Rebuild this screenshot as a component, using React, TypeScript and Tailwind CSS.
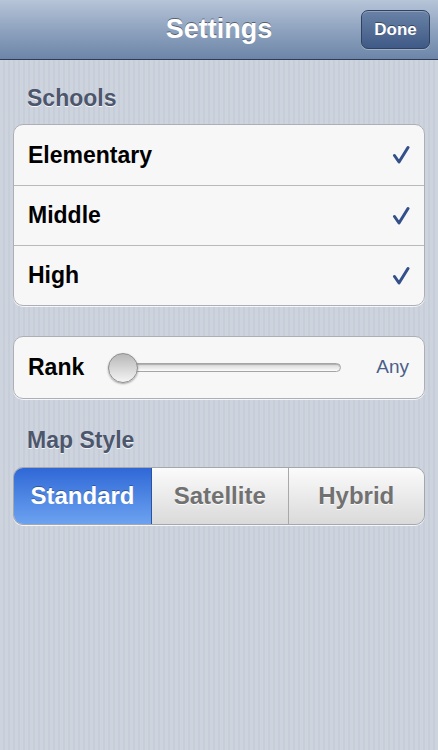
import React from "react";

const Check = () => (
  <svg width="18" height="20" viewBox="0 0 18 20" className="shrink-0">
    <path d="M2.5 10.5 L7 17 L16 2.5" fill="none" stroke="#34508a" strokeWidth="3" strokeLinecap="round" strokeLinejoin="round" />
  </svg>
);

const schools = ["Elementary", "Middle", "High"];
const styles = ["Standard", "Satellite", "Hybrid"];

export default function App() {
  return (
    <div
      className="w-[438px] h-[750px] overflow-hidden bg-[#cdd3dd] bg-[repeating-linear-gradient(90deg,#ced4de_0px,#ced4de_3px,#c8ced9_3px,#c8ced9_5px)]"
      style={{ fontFamily: '"Liberation Sans", Arial, sans-serif' }}
    >
      {/* Nav bar */}
      <div className="relative h-[60px] flex items-center justify-center bg-gradient-to-b from-[#b7c5d8] via-[#8fa3bf] to-[#6d86a8] border-b border-[#2e3d55]">
        <h1 className="text-[27px] font-bold text-white [text-shadow:0_-1px_0_rgba(0,0,0,0.45)]">Settings</h1>
        <button className="absolute right-[8px] top-[10px] w-[69px] h-[39px] rounded-[7px] border border-[#2f4260] bg-gradient-to-b from-[#6a82a6] to-[#3f5a86] shadow-[inset_0_1px_0_rgba(255,255,255,0.25),0_1px_0_rgba(255,255,255,0.3)] text-[17px] font-bold text-white [text-shadow:0_-1px_0_rgba(0,0,0,0.4)]">
          Done
        </button>
      </div>

      <div className="px-[13px]">
        {/* Schools */}
        <h2 className="mt-[26px] pl-[14px] text-[23px] leading-[24px] font-bold text-[#4c566c] [text-shadow:0_1px_0_rgba(255,255,255,0.8)]">
          Schools
        </h2>
        <div className="mt-[14px] rounded-[10px] border border-[#acb0b6] bg-[#f7f7f7] shadow-[0_1px_0_rgba(255,255,255,0.8)]">
          {schools.map((s, i) => (
            <div
              key={s}
              className={`h-[60px] flex items-center justify-between pl-[14px] pr-[14px] ${i > 0 ? "border-t border-[#b9b9b9]" : ""}`}
            >
              <span className="text-[23px] font-bold text-black">{s}</span>
              <Check />
            </div>
          ))}
        </div>

        {/* Rank */}
        <div className="mt-[30px] h-[63px] flex items-center rounded-[10px] border border-[#acb0b6] bg-[#f7f7f7] pl-[14px] pr-[15px] shadow-[0_1px_0_rgba(255,255,255,0.8)]">
          <span className="text-[23px] font-bold text-black w-[80px]">Rank</span>
          <div className="relative flex-1 h-[30px] flex items-center">
            <div className="w-[233px] h-[9px] rounded-full border border-[#a5a5a5] bg-gradient-to-b from-[#d6d6d6] to-[#fbfbfb] shadow-[inset_0_1px_1px_rgba(0,0,0,0.2)]" />
            <div className="absolute left-0 top-0 w-[30px] h-[30px] rounded-full border border-[#8e8e8e] bg-gradient-to-b from-[#b8b8b8] to-[#f4f4f4] shadow-[0_1px_2px_rgba(0,0,0,0.35)]" />
          </div>
          <span className="text-[19px] text-[#4a5f8a]">Any</span>
        </div>

        {/* Map style */}
        <h2 className="mt-[29px] pl-[14px] text-[23px] leading-[24px] font-bold text-[#4c566c] [text-shadow:0_1px_0_rgba(255,255,255,0.8)]">
          Map Style
        </h2>
        <div className="mt-[15px] h-[58px] flex rounded-[10px] border border-[#a4a7ac] overflow-hidden shadow-[0_1px_0_rgba(255,255,255,0.8)]">
          {styles.map((s, i) =>
            i === 0 ? (
              <div
                key={s}
                className="w-[138px] flex items-center justify-center bg-gradient-to-b from-[#2f68d6] to-[#6da2f0] border-r border-[#2d52a0] text-[24px] font-bold text-white [text-shadow:0_-1px_0_rgba(0,0,0,0.3)]"
              >
                {s}
              </div>
            ) : (
              <div
                key={s}
                className={`flex-1 flex items-center justify-center bg-gradient-to-b from-[#fbfbfb] to-[#dadada] text-[24px] font-bold text-[#717171] [text-shadow:0_1px_0_rgba(255,255,255,0.9)] ${i === 1 ? "border-r border-[#a9a9a9]" : ""}`}
              >
                {s}
              </div>
            )
          )}
        </div>
      </div>
    </div>
  );
}
